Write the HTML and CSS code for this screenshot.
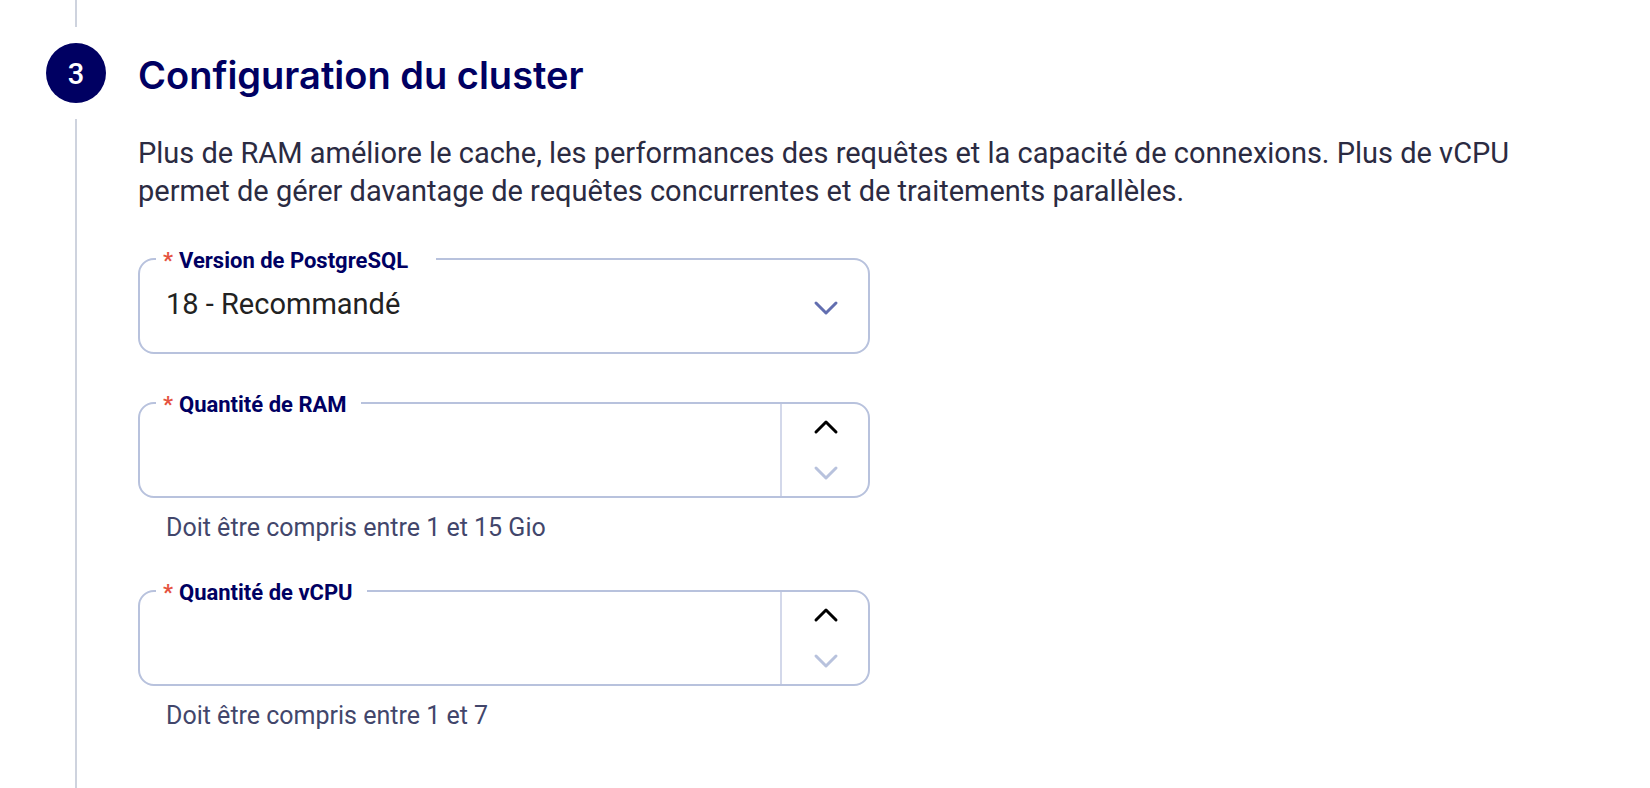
FILE: index.html
```html
<!DOCTYPE html>
<html lang="fr">
<head>
  <meta charset="utf-8">
  <title>Configuration du cluster</title>
  <link rel="stylesheet" href="styles.css">
</head>
<body>
  <div class="step">
    <div class="rail">
      <span class="rail-line rail-line-top"></span>
      <span class="step-number">3</span>
      <span class="rail-line rail-line-bottom"></span>
    </div>

    <form class="step-content">
      <h2>Configuration du cluster</h2>
      <p class="intro">
        Plus de RAM améliore le cache, les performances des requêtes et la capacité de connexions. Plus de vCPU
        permet de gérer davantage de requêtes concurrentes et de traitements parallèles.
      </p>

      <div class="field">
        <div class="field-box">
          <label class="label-select" for="version"><span class="required">*</span>Version de PostgreSQL</label>
          <select id="version" required>
            <option value="18" selected>18 - Recommandé</option>
          </select>
          <svg class="chevron select-chevron" viewBox="0 0 26 16"><path d="M3 3 L13 13 L23 3"/></svg>
        </div>
      </div>

      <div class="field">
        <div class="field-box">
          <label for="ram"><span class="required">*</span>Quantité de RAM</label>
          <input type="number" id="ram" min="1" max="15" required>
          <div class="stepper">
            <button type="button" class="up" aria-label="Augmenter la RAM">
              <svg class="chevron" viewBox="0 0 26 16"><path d="M3 13 L13 3 L23 13"/></svg>
            </button>
            <button type="button" class="down" aria-label="Diminuer la RAM" disabled>
              <svg class="chevron" viewBox="0 0 26 16"><path d="M3 3 L13 13 L23 3"/></svg>
            </button>
          </div>
        </div>
        <p class="hint">Doit être compris entre 1 et 15 Gio</p>
      </div>

      <div class="field">
        <div class="field-box">
          <label for="vcpu"><span class="required">*</span>Quantité de vCPU</label>
          <input type="number" id="vcpu" min="1" max="7" required>
          <div class="stepper">
            <button type="button" class="up" aria-label="Augmenter les vCPU">
              <svg class="chevron" viewBox="0 0 26 16"><path d="M3 13 L13 3 L23 13"/></svg>
            </button>
            <button type="button" class="down" aria-label="Diminuer les vCPU" disabled>
              <svg class="chevron" viewBox="0 0 26 16"><path d="M3 3 L13 13 L23 3"/></svg>
            </button>
          </div>
        </div>
        <p class="hint">Doit être compris entre 1 et 7</p>
      </div>
    </form>
  </div>
</body>
</html>
```
FILE: styles.css
```css
* {
  box-sizing: border-box;
}
body {
  margin: 0;
  background-color: #fff;
  color: #2b2b42;
  font-family: Roboto, sans-serif;
  font-size: 29px;
}
.step {
  display: flex;
  gap: 32px;
  min-height: 100vh;
  padding: 0 100px 0 46px;
}
.rail {
  display: flex;
  flex-direction: column;
  align-items: center;
  gap: 16px;
  flex: 0 0 60px;
}
.rail-line {
  width: 2px;
  background-color: #ced3de;
}
.rail-line-top {
  height: 27px;
}
.rail-line-bottom {
  flex: 1;
}
.step-number {
  width: 60px;
  height: 60px;
  border-radius: 50%;
  background-color: #000062;
  color: #fff;
  font-weight: 500;
  line-height: 62px;
  text-align: center;
}
.step-content {
  flex: 1;
  padding-top: 52px;
}
h2 {
  margin: 0 0 36px;
  color: #000062;
  font-family: Inter, sans-serif;
  font-size: 38px;
  font-weight: 600;
  line-height: 46px;
}
.intro {
  margin: 0;
  line-height: 38px;
}
.field {
  margin-top: 48px;
}
.field-box {
  position: relative;
  display: flex;
  width: 100%;
  max-width: 732px;
  height: 96px;
  border: 2px solid #b8c2dd;
  border-radius: 16px;
}
label {
  position: absolute;
  top: -13px;
  left: 16px;
  padding: 0 14px 0 7px;
  background-color: #fff;
  color: #000062;
  font-size: 22px;
  font-weight: 700;
  line-height: 28px;
}
.label-select {
  padding-right: 28px;
}
.required {
  margin-right: 6px;
  color: #e5533f;
}
select,
input {
  flex: 1;
  min-width: 0;
  margin: 0;
  padding: 0 26px;
  border: none;
  border-radius: 14px;
  outline: none;
  background: none;
  color: #222;
  font: inherit;
}
select {
  padding-right: 80px;
  padding-bottom: 4px;
  appearance: none;
}
input {
  appearance: textfield;
}
.chevron {
  width: 26px;
  height: 16px;
  fill: none;
  stroke: currentColor;
  stroke-width: 3;
  stroke-linecap: round;
  stroke-linejoin: round;
}
.select-chevron {
  position: absolute;
  top: 40px;
  right: 29px;
  color: #626eb0;
  pointer-events: none;
}
.stepper {
  display: flex;
  flex-direction: column;
  width: 88px;
  border-left: 2px solid #d3d8ea;
}
.stepper button {
  display: flex;
  justify-content: center;
  align-items: center;
  flex: 1;
  padding: 0 0 0 2px;
  border: none;
  background: none;
  color: #000;
  cursor: pointer;
}
.stepper button:disabled {
  color: #b8c2dd;
  cursor: not-allowed;
}
.hint {
  margin: 16px 0 0 28px;
  color: #42466b;
  font-size: 25px;
  line-height: 28px;
}
```
